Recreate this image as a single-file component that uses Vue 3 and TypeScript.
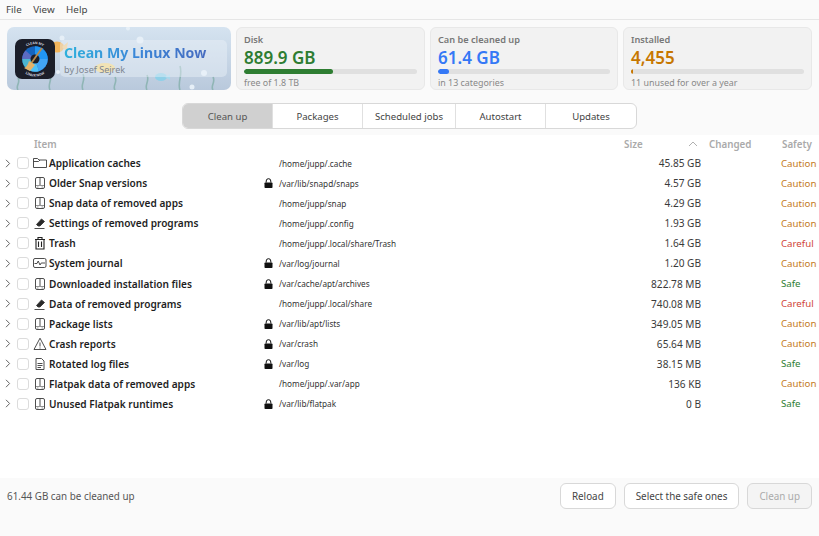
<script setup lang="ts">
type IconKind = "folder" | "drive" | "eraser" | "trash" | "journal" | "warning" | "doc";
type Safety = "Caution" | "Careful" | "Safe";

interface Row {
  name: string;
  icon: IconKind;
  locked: boolean;
  path: string;
  size: string;
  safety: Safety;
}

const menus = ["File", "View", "Help"];
const tabs = ["Clean up", "Packages", "Scheduled jobs", "Autostart", "Updates"];

const stats = [
  { label: "Disk", value: "889.9 GB", note: "free of 1.8 TB", pct: 51.5, color: "#2e7d32" },
  { label: "Can be cleaned up", value: "61.4 GB", note: "in 13 categories", pct: 6.5, color: "#3478f6" },
  { label: "Installed", value: "4,455", note: "11 unused for over a year", pct: 1, color: "#c77700" },
];

const rows: Row[] = [
  { name: "Application caches", icon: "folder", locked: false, path: "/home/jupp/.cache", size: "45.85 GB", safety: "Caution" },
  { name: "Older Snap versions", icon: "drive", locked: true, path: "/var/lib/snapd/snaps", size: "4.57 GB", safety: "Caution" },
  { name: "Snap data of removed apps", icon: "drive", locked: false, path: "/home/jupp/snap", size: "4.29 GB", safety: "Caution" },
  { name: "Settings of removed programs", icon: "eraser", locked: false, path: "/home/jupp/.config", size: "1.93 GB", safety: "Caution" },
  { name: "Trash", icon: "trash", locked: false, path: "/home/jupp/.local/share/Trash", size: "1.64 GB", safety: "Careful" },
  { name: "System journal", icon: "journal", locked: true, path: "/var/log/journal", size: "1.20 GB", safety: "Caution" },
  { name: "Downloaded installation files", icon: "drive", locked: true, path: "/var/cache/apt/archives", size: "822.78 MB", safety: "Safe" },
  { name: "Data of removed programs", icon: "eraser", locked: false, path: "/home/jupp/.local/share", size: "740.08 MB", safety: "Careful" },
  { name: "Package lists", icon: "drive", locked: true, path: "/var/lib/apt/lists", size: "349.05 MB", safety: "Caution" },
  { name: "Crash reports", icon: "warning", locked: true, path: "/var/crash", size: "65.64 MB", safety: "Caution" },
  { name: "Rotated log files", icon: "doc", locked: true, path: "/var/log", size: "38.15 MB", safety: "Safe" },
  { name: "Flatpak data of removed apps", icon: "drive", locked: false, path: "/home/jupp/.var/app", size: "136 KB", safety: "Caution" },
  { name: "Unused Flatpak runtimes", icon: "drive", locked: true, path: "/var/lib/flatpak", size: "0 B", safety: "Safe" },
];

const weeds = [
  { x: 11, h: 12 },
  { x: 43, h: 17 },
  { x: 76, h: 16 },
  { x: 108, h: 13 },
  { x: 140, h: 15 },
  { x: 173, h: 24 },
  { x: 206, h: 13 },
];
const bubbles = [
  { x: 55, y: 11, r: 2.5 },
  { x: 121, y: 1.5, r: 2 },
  { x: 133, y: 13, r: 3.5 },
  { x: 197, y: 46, r: 3 },
  { x: 185, y: 60, r: 2.5 },
  { x: 51, y: 45, r: 2 },
];
</script>

<template>
  <div class="app">
    <nav class="menubar">
      <span v-for="m in menus" :key="m">{{ m }}</span>
    </nav>

    <section class="top">
      <div class="banner">
        <svg class="sea" width="224" height="63" viewBox="0 0 224 63" aria-hidden="true">
          <path
            v-for="w in weeds"
            :key="w.x"
            :d="`M${w.x} 63c-3-${w.h / 3} 3-${w.h * 0.6} 0-${w.h}`"
            fill="none"
            stroke="#8fb5b5"
            stroke-width="1.6"
          />
          <circle v-for="b in bubbles" :key="b.x" :cx="b.x" :cy="b.y" :r="b.r" fill="#e6eff7" />
          <ellipse cx="50" cy="20" rx="7" ry="5.500" fill="#f2b55c" />
          <path d="M55 20l6-5-1 5 1 5z" fill="#f4cb85" />
          <ellipse cx="98" cy="41" rx="10" ry="5" fill="#f6d77f" />
          <ellipse cx="154" cy="50" rx="6" ry="4" fill="#8fd0e8" />
          <path d="M158 50l5-3v6z" fill="#a9d8ec" />
        </svg>
        <svg class="logo" width="40" height="40" viewBox="0 0 40 40" aria-hidden="true">
          <defs>
            <path id="ring-top" d="M5 20a15 15 0 0 1 30 0" />
            <path id="ring-bottom" d="M2.500 20a17.500 17.500 0 0 0 35 0" />
          </defs>
          <rect width="40" height="40" rx="7" fill="#1b1e29" />
          <text font-family="Noto Sans" font-size="3.400" font-weight="700" fill="#d5d9e0" text-anchor="middle">
            <textPath href="#ring-top" startOffset="50%">CLEAN MY</textPath>
          </text>
          <text font-family="Noto Sans" font-size="3.400" font-weight="700" fill="#d5d9e0" text-anchor="middle">
            <textPath href="#ring-bottom" startOffset="50%">LINUX NOW</textPath>
          </text>
          <circle cx="20" cy="20" r="12.800" fill="#1565c0" />
          <path d="M20 20V7.200A12.800 12.800 0 0 1 32.800 20z" fill="#2196f3" />
          <path d="M20 20h12.800A12.800 12.800 0 0 1 24 32.200z" fill="#42a5f5" />
          <path d="M20 20l4 12.200a12.800 12.800 0 0 1-9 -.500z" fill="#4fc3f7" />
          <path d="M20 20l-5 11.700A12.800 12.800 0 0 1 7.200 20z" fill="#4db6d0" />
          <path d="M20 20H7.200A12.800 12.800 0 0 1 10.500 11.500z" fill="#5c6bc0" />
          <circle cx="20" cy="20" r="4.500" fill="#1b1e29" />
          <path d="M27 9L15 26" stroke="#b98a4a" stroke-width="1.800" />
          <path d="M14 22l6 4-5 6-6-3c3-1 4-4 5-7z" fill="#e5b368" />
        </svg>
        <div class="banner-text">
          <div class="banner-title">Clean My Linux Now</div>
          <div class="banner-by">by Josef Sejrek</div>
        </div>
      </div>

      <div v-for="s in stats" :key="s.label" class="stat">
        <div class="stat-label">{{ s.label }}</div>
        <div class="stat-value" :style="{ color: s.color }">{{ s.value }}</div>
        <div class="track">
          <div class="fill" :style="{ width: s.pct + '%', background: s.color }"></div>
        </div>
        <div class="stat-note">{{ s.note }}</div>
      </div>
    </section>

    <div class="tabs-wrap">
      <div class="tabs">
        <button v-for="(t, i) in tabs" :key="t" class="tab" :class="{ active: i === 0 }">{{ t }}</button>
      </div>
    </div>

    <main class="tree">
      <div class="head">
        <span class="h-item">Item</span>
        <span class="h-size">Size</span>
        <svg class="sort" width="10" height="6" viewBox="0 0 10 6" aria-hidden="true">
          <path d="M1 5l4-4 4 4" fill="none" stroke="#b0b0b0" />
        </svg>
        <span class="h-changed">Changed</span>
        <span class="h-safety">Safety</span>
      </div>

      <div v-for="r in rows" :key="r.name" class="row">
        <svg class="chev" width="6" height="9" viewBox="0 0 6 9" aria-hidden="true">
          <path d="M1 .8l3.600 3.700L1 8.200" fill="none" stroke="#666" />
        </svg>
        <span class="check"></span>
        <svg class="icon" width="14" height="14" viewBox="0 0 14 14" aria-hidden="true">
          <g fill="none" stroke="#3a3a3a" stroke-width="0.900">
            <template v-if="r.icon === 'folder'">
              <path d="M.5 11.500v-9h4l1.500 1.500h7.500v7.500z" />
              <path d="M.5 5.500h5l1.500-1.500" />
            </template>
            <template v-else-if="r.icon === 'drive'">
              <rect x="2.500" y="1.500" width="9" height="11" rx="1.500" />
              <path d="M7 1.500v7.500" />
              <path d="M3 9.500h8M4 11h1.500M8.500 11H10" stroke="#888" />
            </template>
            <template v-else-if="r.icon === 'eraser'">
              <path d="M3.500 8.500l5-5.500 3 2.500-4.500 4.500H5z" fill="#2a2a2a" />
              <path d="M1.500 12.500h10" />
            </template>
            <template v-else-if="r.icon === 'trash'">
              <path d="M2 3.500h10M5 3.500v-2h4v2M3 3.500v9.500h8v-9.500M5.500 5.500v5.500M8.500 5.500v5.500" stroke="#222" stroke-width="1.100" />
            </template>
            <template v-else-if="r.icon === 'journal'">
              <rect x="0.500" y="2.500" width="12.500" height="9" rx="1.500" />
              <path d="M1.500 7.500h2.500l1.200-2.500 1.800 4 1.200-2H12" />
            </template>
            <template v-else-if="r.icon === 'warning'">
              <path d="M7 1.200l6 11.300H1z" />
              <path d="M7 5.500v4M7 10.500v1" />
            </template>
            <template v-else>
              <path d="M3 1.500h5.500l2.500 2.500v8.500H3z" />
              <path d="M4.500 6.500h5M4.500 8.500h5M4.500 10.500h3.500" />
            </template>
          </g>
        </svg>
        <span class="name">{{ r.name }}</span>
        <span class="lock">
          <svg v-if="r.locked" width="9" height="10" viewBox="0 0 9 10" aria-hidden="true">
            <path d="M2.200 4.500V3a2.300 2.300 0 0 1 4.600 0v1.500" fill="none" stroke="#111" />
            <rect x="0.500" y="4.500" width="8" height="5.500" rx="0.800" fill="#111" />
          </svg>
        </span>
        <span class="path">{{ r.path }}</span>
        <span class="size">{{ r.size }}</span>
        <span class="safety" :class="r.safety.toLowerCase()">{{ r.safety }}</span>
      </div>
    </main>

    <footer class="foot">
      <span class="summary">61.44 GB can be cleaned up</span>
      <div class="actions">
        <button class="btn">Reload</button>
        <button class="btn">Select the safe ones</button>
        <button class="btn off">Clean up</button>
      </div>
    </footer>
  </div>
</template>

<style scoped>
.app {
  width: 819px;
  height: 536px;
  display: flex;
  flex-direction: column;
  overflow: hidden;
  background: #fafafa;
  color: #2e2e2e;
  font-family: "Noto Sans", sans-serif;
  font-size: 10px;
}

.menubar {
  height: 19px;
  flex: none;
  display: flex;
  gap: 11.500px;
  align-items: center;
  padding: 0 6px;
  font-size: 9.800px;
  color: #444;
  border-bottom: 1px solid #e6e6e6;
}

.top {
  flex: none;
  display: grid;
  grid-template-columns: 224px 189px 188px 189px;
  gap: 5px;
  padding: 7px 7px 0;
  height: 63px;
}

.banner {
  position: relative;
  display: flex;
  align-items: center;
  overflow: hidden;
  border-radius: 7px;
  background: linear-gradient(180deg, #d5e3f0 0%, #b9c9dc 100%);
}

.sea {
  position: absolute;
  left: 0;
  top: 0;
}

.logo {
  position: relative;
  flex: none;
  margin-left: 8px;
  margin-top: 1px;
}

.banner-text {
  position: relative;
  margin-left: 5px;
  width: 167px;
  height: 37px;
  padding: 3px 0 0 5px;
  box-sizing: border-box;
  border-radius: 5px;
  background: rgba(235, 241, 248, 0.45);
}

.banner-title {
  font-size: 14.100px;
  line-height: 19px;
  font-weight: 700;
  margin-left: -1px;
  background: linear-gradient(90deg, #2fb0dc 0%, #3a86d8 45%, #4a63b8 100%);
  -webkit-background-clip: text;
  background-clip: text;
  color: transparent;
  white-space: nowrap;
}

.banner-by {
  font-size: 9.050px;
  line-height: 13px;
  margin-top: 1px;
  color: #7d8590;
  margin-left: -1px;
}

.stat {
  border: 1px solid #e8e8e8;
  border-radius: 6px;
  background: #f2f2f2;
  padding: 6px 7px 0;
  box-sizing: border-box;
  min-width: 0;
}

.stat-label {
  font-size: 9.200px;
  line-height: 12px;
  font-weight: 600;
  color: #777;
}

.stat-value {
  font-size: 17px;
  line-height: 20px;
  margin-top: 2px;
  font-weight: 600;
}

.track {
  height: 5px;
  border-radius: 3px;
  background: #e0e0e0;
  overflow: hidden;
  margin-top: 1px;
}

.fill {
  height: 100%;
  border-radius: 3px;
}

.stat-note {
  font-size: 8.900px;
  line-height: 13px;
  margin-top: 2px;
  color: #888;
}

.tabs-wrap {
  flex: none;
  height: 45px;
  box-sizing: border-box;
  padding-top: 13px;
  display: flex;
  justify-content: center;
}

.tabs {
  display: flex;
  width: 455px;
  height: 26px;
  box-sizing: border-box;
  border: 1px solid #d8d8d8;
  border-radius: 6px;
  background: #fff;
  overflow: hidden;
}

.tab {
  flex: none;
  width: 90px;
  padding: 0;
  border: 0;
  border-right: 1px solid #e0e0e0;
  background: transparent;
  color: #444;
  font: inherit;
  font-size: 9.600px;
}

.tab:nth-child(3) { width: 93px; }
.tab:last-child { border-right: 0; }

.tab.active {
  background: #d0d0d0;
  color: #555;
}

.tree {
  flex: 1;
  background: #fff;
  min-height: 0;
}

.head {
  height: 18px;
  display: flex;
  align-items: center;
  font-size: 9.800px;
  font-weight: 600;
  color: #aaa;
}

.h-item { margin-left: 34px; width: 590px; }
.h-size { width: 64px; }
.sort { flex: none; margin-right: 11px; }
.h-changed { width: 73px; }

.row {
  height: 20.080px;
  display: grid;
  grid-template-columns: 17px 16px 16px 215px 15px 1fr 70px 80px 38px;
  align-items: center;
}

.chev {
  margin-left: 5px;
}

.check {
  width: 10px;
  height: 10px;
  border: 1px solid #dcdcdc;
  border-radius: 3px;
  background: #fff;
}

.name {
  font-weight: 600;
  font-size: 10.100px;
  color: #1e1e1e;
  white-space: nowrap;
}

.lock {
  display: flex;
  align-items: center;
}

.path {
  font-size: 8.200px;
  color: #333;
  white-space: nowrap;
}

.size {
  text-align: right;
  font-size: 10.100px;
  color: #3a3a3a;
  white-space: nowrap;
}

.safety {
  grid-column: 8;
  margin-left: 80px;
  font-size: 9.700px;
}

.caution { color: #c47a1d; }
.careful { color: #d04437; }
.safe { color: #2e7d32; }

.foot {
  flex: none;
  height: 58px;
  display: flex;
  justify-content: space-between;
  align-items: flex-start;
  padding: 5px 7px 0;
  box-sizing: border-box;
}

.summary {
  font-size: 9.850px;
  line-height: 26px;
  color: #555;
}

.actions {
  display: flex;
  gap: 8px;
}

.btn {
  height: 26px;
  padding: 0 11px;
  box-sizing: border-box;
  border: 1px solid #d8d8d8;
  border-radius: 6px;
  background: #fff;
  color: #444;
  font: inherit;
  font-size: 9.850px;
}

.btn.off {
  background: #f4f4f4;
  color: #aaa;
}
</style>
